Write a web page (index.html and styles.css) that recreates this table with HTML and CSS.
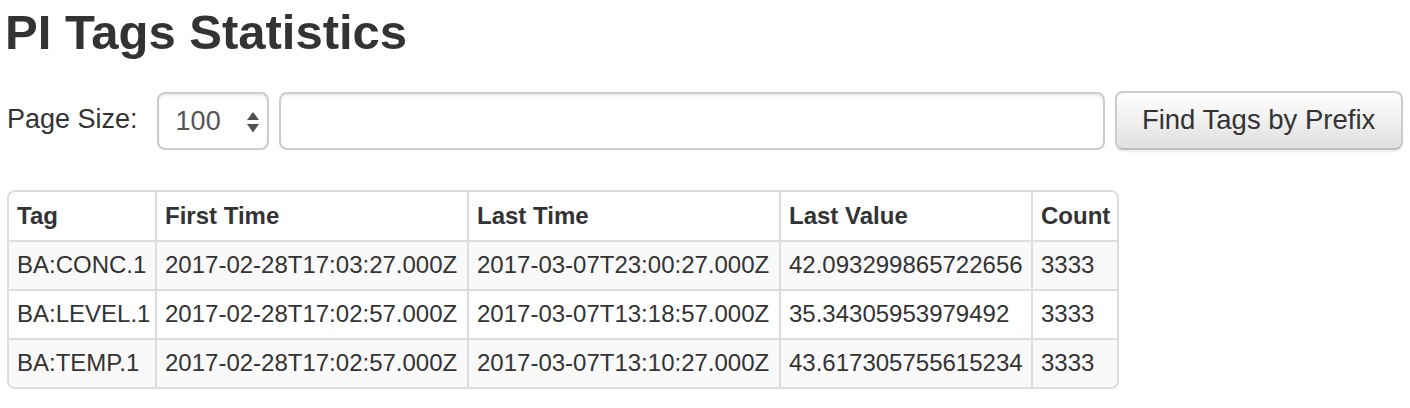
FILE: index.html
```html
<!DOCTYPE html>
<html>
<head>
<meta charset="utf-8">
<title>PI Tags Statistics</title>
<link rel="stylesheet" href="styles.css">
</head>
<body>
<div class="page">
  <h1 class="title">PI Tags Statistics</h1>
  <form class="search-form">
    <label class="size-label" for="pageSize">Page Size:</label>
    <div class="select-wrap">
      <select id="pageSize" class="size-select">
        <option>100</option>
      </select>
      <svg class="select-arrows" width="12" height="21" viewBox="0 0 12 21" aria-hidden="true">
        <polygon points="6,0 12,8 0,8" fill="#505050"/>
        <polygon points="0,12 12,12 6,20.5" fill="#505050"/>
      </svg>
    </div>
    <input class="prefix-input" type="text">
    <button class="find-btn" type="button">Find Tags by Prefix</button>
  </form>
  <div class="table-wrap">
    <table class="stats-table">
      <colgroup>
        <col class="col-tag">
        <col class="col-time">
        <col class="col-time">
        <col class="col-value">
        <col class="col-count">
      </colgroup>
      <thead>
        <tr><th>Tag</th><th>First Time</th><th>Last Time</th><th>Last Value</th><th>Count</th></tr>
      </thead>
      <tbody>
        <tr><td>BA:CONC.1</td><td>2017-02-28T17:03:27.000Z</td><td>2017-03-07T23:00:27.000Z</td><td>42.093299865722656</td><td>3333</td></tr>
        <tr><td>BA:LEVEL.1</td><td>2017-02-28T17:02:57.000Z</td><td>2017-03-07T13:18:57.000Z</td><td>35.34305953979492</td><td>3333</td></tr>
        <tr><td>BA:TEMP.1</td><td>2017-02-28T17:02:57.000Z</td><td>2017-03-07T13:10:27.000Z</td><td>43.617305755615234</td><td>3333</td></tr>
      </tbody>
    </table>
  </div>
</div>
</body>
</html>
```
FILE: styles.css
```css
html, body {
  margin: 0;
  padding: 0;
  background: #fff;
}
body {
  font-family: "Liberation Sans", Arial, Helvetica, sans-serif;
  color: #333;
}
.page {
  padding: 6px 7px 0 7px;
}
.title {
  margin: 0 0 0 -2px;
  font-size: 49px;
  line-height: 52px;
  font-weight: bold;
  color: #333;
}
.search-form {
  display: flex;
  align-items: center;
  margin-top: 33px;
  height: 59px;
}
.size-label {
  flex: none;
  white-space: nowrap;
  font-size: 27px;
  color: #333;
  margin-right: 19px;
  margin-top: -2px;
}
.select-wrap {
  position: relative;
  width: 112px;
  height: 58px;
  flex: none;
}
.size-select {
  -webkit-appearance: none;
  appearance: none;
  box-sizing: border-box;
  width: 112px;
  height: 58px;
  border: 2px solid #ccc;
  border-radius: 8px;
  background: #fff;
  box-shadow: inset 0 2px 2px rgba(0,0,0,.075);
  font-family: "Liberation Sans", Arial, sans-serif;
  font-size: 27px;
  color: #555;
  padding: 0 0 0 17px;
  margin: 0;
  outline: none;
}
.select-arrows {
  position: absolute;
  left: 90px;
  top: 20px;
}
.prefix-input {
  box-sizing: border-box;
  flex: none;
  width: 826px;
  height: 58px;
  margin: 0 0 0 10px;
  border: 2px solid #ccc;
  border-radius: 8px;
  box-shadow: inset 0 2px 2px rgba(0,0,0,.075);
  background: #fff;
  font-family: "Liberation Sans", Arial, sans-serif;
  font-size: 27px;
  padding: 0 16px;
  outline: none;
}
.find-btn {
  box-sizing: border-box;
  flex: none;
  width: 288px;
  height: 59px;
  margin: 0 0 0 10px;
  border: 2px solid #ccc;
  border-bottom-color: #bdbdbd;
  border-radius: 8px;
  background: linear-gradient(to bottom, #ffffff 0%, #e0e0e0 100%);
  box-shadow: inset 0 2px 0 rgba(255,255,255,.15), 0 2px 2px rgba(0,0,0,.075);
  font-family: "Liberation Sans", Arial, sans-serif;
  font-size: 27.5px;
  color: #333;
  padding: 0 0 2px 0;
  cursor: pointer;
}
.table-wrap {
  display: inline-block;
  margin-top: 40px;
  border: 2px solid #ddd;
  border-radius: 8px;
  overflow: hidden;
}
.stats-table {
  border-collapse: collapse;
  table-layout: fixed;
  width: 1108px;
  font-size: 24px;
  color: #333;
}
.col-tag { width: 147px; }
.col-time { width: 312px; }
.col-value { width: 252px; }
.col-count { width: 85px; }
.stats-table th,
.stats-table td {
  padding: 8px 0 10px 8px;
  line-height: 29px;
  text-align: left;
  white-space: nowrap;
  overflow: hidden;
  border-left: 2px solid #ddd;
  border-top: 2px solid #ddd;
}
.stats-table th {
  font-weight: bold;
  border-top: none;
  padding-top: 9px;
  padding-bottom: 10px;
}
.stats-table th:first-child,
.stats-table td:first-child {
  border-left: none;
}
.stats-table tbody tr:nth-child(odd) {
  background: #f9f9f9;
}
```
